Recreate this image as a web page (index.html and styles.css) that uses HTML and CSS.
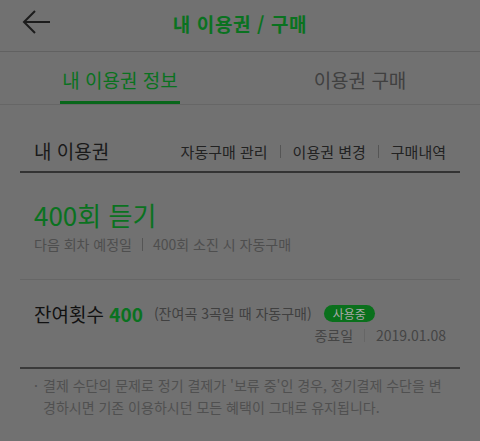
FILE: index.html
```html
<!DOCTYPE html>
<html lang="ko">
<head>
    <meta charset="UTF-8">
    <meta name="viewport" content="width=device-width, initial-scale=1.0">
    <title>내 이용권 / 구매</title>
    <link rel="stylesheet" href="styles.css">
</head>
<body>
    <header class="topbar">
        <a class="back">
            <svg width="30" height="26" viewBox="0 0 30 26">
                <path d="M28 13H2M13 2L2 13l11 11" fill="none" stroke="#1c1c1c" stroke-width="2"/>
            </svg>
        </a>
        <h1>내 이용권 / 구매</h1>
    </header>

    <nav class="tabs">
        <div class="tab active">내 이용권 정보</div>
        <div class="tab">이용권 구매</div>
    </nav>

    <section class="mine">
        <div class="mine-head">
            <h2>내 이용권</h2>
            <div class="links">
                <span>자동구매 관리</span><i></i><span>이용권 변경</span><i></i><span>구매내역</span>
            </div>
        </div>

        <div class="ticket">
            <p class="ticket-name">400회 듣기</p>
            <p class="ticket-sub">다음 회차 예정일<i></i>400회 소진 시 자동구매</p>
        </div>

        <div class="remain">
            <div class="remain-row">
                <span class="remain-label">잔여횟수 <b>400</b></span>
                <span class="remain-note">(잔여곡 3곡일 때 자동구매)</span>
                <span class="badge">사용중</span>
            </div>
            <div class="end">종료일<i></i>2019.01.08</div>
        </div>
    </section>

    <p class="notice">결제 수단의 문제로 정기 결제가 '보류 중'인 경우, 정기결제 수단을 변경하시면 기존 이용하시던 모든 혜택이 그대로 유지됩니다.</p>
</body>
</html>
```

FILE: styles.css
```css
body {
    margin: 0;
    background-color: #717171;
    font-family: "Noto Sans CJK KR", "Noto Sans", sans-serif;
    color: #1a1a1a;
}

p, h1, h2 {
    margin: 0;
}

.topbar {
    height: 51px;
    border-bottom: 1px solid #616161;
    display: flex;
    align-items: center;
    justify-content: center;
    position: relative;
}

.back {
    position: absolute;
    left: 22px;
    top: 9px;
}

.topbar h1 {
    font-size: 19px;
    font-weight: bold;
    color: #0a7220;
    letter-spacing: 0.6px;
    padding-bottom: 5px;
}

.tabs {
    display: flex;
    align-items: flex-start;
    height: 52px;
    border-bottom: 1px solid #666;
}

.tab {
    flex: 1;
    text-align: center;
    font-size: 19px;
    line-height: 42px;
    padding-top: 7px;
    color: #404040;
}

.tab.active {
    color: #0a7220;
    flex: 0 0 120px;
    margin: 0 60px;
    border-bottom: 3px solid #08661a;
}

.mine {
    margin: 0 20px;
}

.mine-head {
    display: flex;
    justify-content: space-between;
    align-items: center;
    padding: 32px 14px 6px;
    border-bottom: 2px solid #333;
}

.mine-head h2 {
    font-size: 19px;
    line-height: 28px;
    font-weight: normal;
}

.links {
    display: flex;
    align-items: center;
    font-size: 15px;
    color: #222;
}

.links i,
.ticket-sub i,
.end i {
    display: inline-block;
    width: 1px;
    height: 13px;
    background-color: #555;
    margin: 0 12px;
}

.ticket {
    padding: 25px 14px 25px;
    border-bottom: 1px solid #666;
}

.ticket-name {
    font-size: 26px;
    color: #0a7220;
    line-height: 34px;
}

.ticket-sub {
    font-size: 14px;
    line-height: 20px;
    color: #4e4e4e;
    margin-top: 2px;
    display: flex;
    align-items: center;
}

.ticket-sub i {
    margin: 0 10px;
}

.remain {
    padding: 19px 14px 22px;
    border-bottom: 2px solid #3a3a3a;
}

.remain-row {
    display: flex;
    align-items: center;
    height: 28px;
}

.remain-label {
    font-size: 19px;
    color: #111;
}

.remain-label b {
    color: #0a7220;
}

.remain-note {
    font-size: 14px;
    color: #404040;
    margin-left: 11px;
}

.badge {
    margin-left: 12px;
    background-color: #0a701c;
    color: #a9a9a9;
    font-size: 12px;
    line-height: 17px;
    padding: 0 9px;
    border-radius: 9px;
}

.end {
    display: flex;
    justify-content: flex-end;
    align-items: center;
    font-size: 14px;
    line-height: 20px;
    color: #454545;
    margin-top: -2px;
}

.end i {
    background-color: #666;
    margin: 0 11px;
}

.notice {
    margin: 5px 30px 0 43px;
    font-size: 14px;
    line-height: 22px;
    color: #505050;
    position: relative;
}

.notice::before {
    content: "·";
    position: absolute;
    left: -9px;
}
```
